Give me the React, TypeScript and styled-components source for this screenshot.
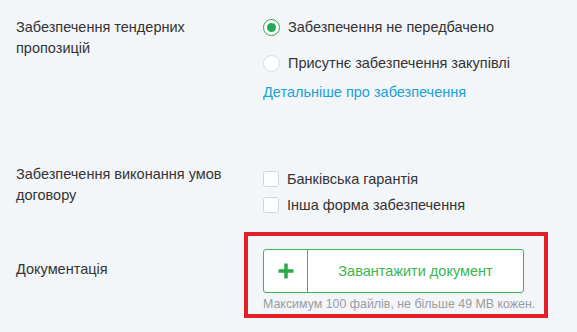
import React from 'react';
import styled, { createGlobalStyle } from 'styled-components';

const Global = createGlobalStyle`
  html, body {
    margin: 0;
    background: #f3f6f9;
  }
  body {
    font-family: "Liberation Sans", Arial, sans-serif;
    font-size: 14.5px;
    color: #333;
  }
`;

const Page = styled.div`
  width: 577px;
  height: 332px;
  box-sizing: border-box;
  padding: 17px 0 0 16px;
  display: flex;
  flex-direction: column;
`;

const Row = styled.div<{ $gap?: number }>`
  display: grid;
  grid-template-columns: 247px 1fr;
  align-items: start;
  margin-top: ${p => p.$gap ?? 0}px;
`;

const Label = styled.div<{ $top?: number }>`
  line-height: 21px;
  padding-top: ${p => p.$top ?? 0}px;
  color: #333;
`;

const Options = styled.div<{ $top?: number }>`
  display: flex;
  flex-direction: column;
  align-items: flex-start;
  padding-top: ${p => p.$top ?? 0}px;
`;

const Option = styled.label<{ $gap?: number }>`
  display: flex;
  align-items: center;
  gap: 8px;
  height: 20px;
  margin-top: ${p => p.$gap ?? 0}px;
  color: #333;
`;

const Radio = styled.span<{ $checked?: boolean }>`
  width: 17px;
  height: 17px;
  box-sizing: border-box;
  border-radius: 50%;
  background: #fff;
  border: 1.5px solid ${p => (p.$checked ? '#22a957' : '#d6dbe1')};
  display: flex;
  align-items: center;
  justify-content: center;
  &::after {
    content: '';
    width: 9px;
    height: 9px;
    border-radius: 50%;
    background: ${p => (p.$checked ? '#22a957' : 'transparent')};
  }
`;

const Check = styled.span`
  width: 16px;
  height: 16px;
  box-sizing: border-box;
  border: 1px solid #cfd5dc;
  border-radius: 3px;
  background: #fff;
`;

const Link = styled.a`
  margin-top: 9px;
  line-height: 20px;
  color: #1ba1d6;
  text-decoration: none;
`;

const Upload = styled.div`
  position: relative;
  width: 261px;
  &::after {
    content: '';
    position: absolute;
    left: -19px;
    top: -17px;
    right: -24px;
    bottom: -7px;
    border: 4px solid #e3202a;
    pointer-events: none;
  }
`;

const UploadButton = styled.button`
  display: flex;
  width: 261px;
  height: 44px;
  padding: 0;
  box-sizing: border-box;
  border: 1px solid #3ab54f;
  border-radius: 3px;
  background: #fff;
  font-family: inherit;
  cursor: pointer;
`;

const PlusCell = styled.span`
  width: 43px;
  height: 100%;
  border-right: 1px solid #3ab54f;
  display: flex;
  align-items: center;
  justify-content: center;
`;

const ButtonText = styled.span`
  flex: 1;
  display: flex;
  align-items: center;
  justify-content: center;
  font-size: 14.5px;
  color: #3ab54f;
`;

const Hint = styled.div`
  margin-top: 4px;
  font-size: 12.4px;
  line-height: 14px;
  color: #999da2;
  white-space: nowrap;
`;

export default function App() {
  return (
    <>
      <Global />
      <Page>
        <Row>
          <Label>
            Забезпечення тендерних
            <br />
            пропозицій
          </Label>
          <Options>
            <Option>
              <Radio $checked />
              Забезпечення не передбачено
            </Option>
            <Option $gap={16}>
              <Radio />
              Присутнє забезпечення закупівлі
            </Option>
            <Link href="#">Детальніше про забезпечення</Link>
          </Options>
        </Row>
        <Row $gap={62}>
          <Label>
            Забезпечення виконання умов
            <br />
            договору
          </Label>
          <Options $top={5}>
            <Option>
              <Check />
              Банківська гарантія
            </Option>
            <Option $gap={6}>
              <Check />
              Інша форма забезпечення
            </Option>
          </Options>
        </Row>
        <Row $gap={34}>
          <Label $top={10}>Документація</Label>
          <Upload>
            <UploadButton>
              <PlusCell>
                <svg width="16" height="16" viewBox="0 0 16 16">
                  <path d="M8 0.5v15M0.5 8h15" stroke="#2ea84a" strokeWidth="3.5" />
                </svg>
              </PlusCell>
              <ButtonText>Завантажити документ</ButtonText>
            </UploadButton>
            <Hint>Максимум 100 файлів, не більше 49 MB кожен.</Hint>
          </Upload>
        </Row>
      </Page>
    </>
  );
}
